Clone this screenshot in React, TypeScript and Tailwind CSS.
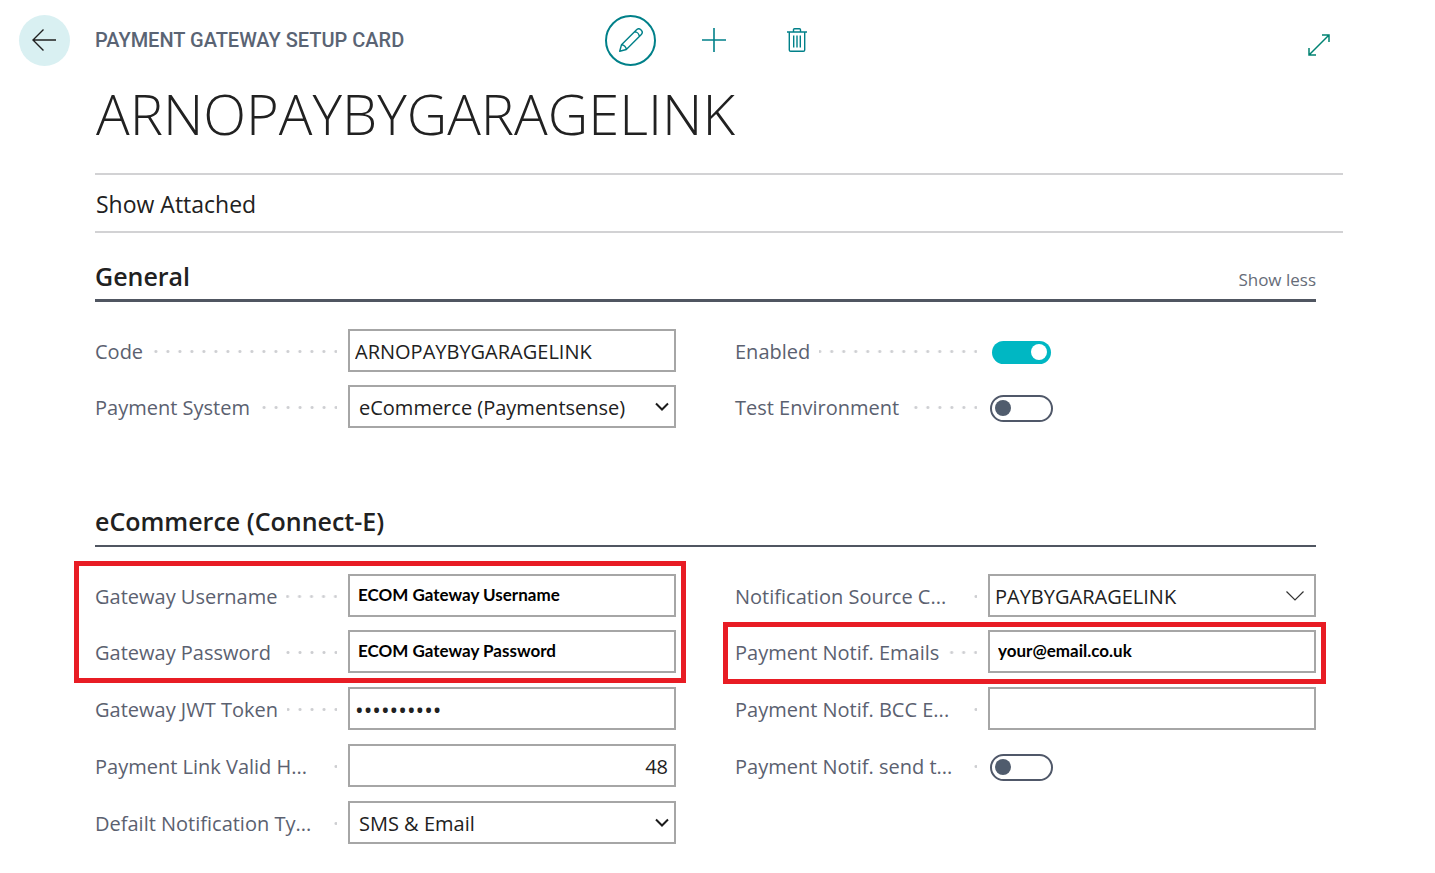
import { useState, type ReactNode } from "react";

const box =
  "h-[43px] w-full border-2 border-[#a6a6a6] bg-white pt-[2px] leading-6 text-[#212121] outline-none";

function Leader() {
  return (
    <span
      aria-hidden="true"
      className="mr-[11px] ml-[9px] h-[3px] flex-1 bg-[radial-gradient(circle_at_center,#cdced1_1px,transparent_2px)] bg-[length:12px_3px] bg-[position:right_-5px_center] bg-repeat-x"
    />
  );
}

type FieldProps = { id: string; label: string; children: ReactNode };

function Field({ id, label, children }: FieldProps) {
  const long = label.endsWith("...");
  return (
    <div className="flex h-[43px] items-center">
      <div className="flex w-[253px] shrink-0 items-center pt-[2px]">
        <label
          htmlFor={id}
          className={`text-[20px] leading-6 whitespace-nowrap text-[#5b6170] ${long ? "min-w-[226px]" : ""}`}
        >
          {label}
        </label>
        <Leader />
      </div>
      <div className="relative flex min-w-0 flex-1 items-center">{children}</div>
    </div>
  );
}

function TextField({ id, label, value }: { id: string; label: string; value: string }) {
  return (
    <Field id={id} label={label}>
      <input id={id} type="text" defaultValue={value} className={`${box} px-[5px] text-[20px]`} />
    </Field>
  );
}

function BoldField({ id, label, value }: { id: string; label: string; value: string }) {
  return (
    <Field id={id} label={label}>
      <input
        id={id}
        type="text"
        defaultValue={value}
        className="h-[43px] w-full border-2 border-[#a6a6a6] bg-white px-2 pb-[3px] font-[Lato,sans-serif] text-[17px] leading-6 font-bold text-black outline-none"
      />
    </Field>
  );
}

function SelectField({ id, label, value }: { id: string; label: string; value: string }) {
  return (
    <Field id={id} label={label}>
      <select id={id} defaultValue={value} className={`${box} appearance-none px-[9px] text-[20px]`}>
        <option>{value}</option>
      </select>
      <svg
        viewBox="0 0 14 10"
        className="pointer-events-none absolute right-[7px] h-[10px] w-[14px]"
        fill="none"
        stroke="#1b1b1b"
        strokeWidth="2"
      >
        <path d="M1 1.5 7 7.5 13 1.5" />
      </svg>
    </Field>
  );
}

function Toggle({ id, label, initial }: { id: string; label: string; initial: boolean }) {
  const [on, setOn] = useState(initial);
  return (
    <Field id={id} label={label}>
      <input
        id={id}
        type="checkbox"
        role="switch"
        checked={on}
        onChange={() => setOn(!on)}
        className="absolute left-[2px] h-[27px] w-[63px] cursor-pointer opacity-0"
      />
      <div className="pointer-events-none flex pt-[3px] pl-[2px]">
        {on ? (
          <span className="mx-[2px] flex h-[23px] w-[59px] items-center justify-end rounded-full bg-[#00b7c3] pr-1">
            <span className="size-4 rounded-full bg-white" />
          </span>
        ) : (
          <span className="flex h-[27px] w-[63px] items-center rounded-full border-2 border-[#505869] pl-[3px]">
            <span className="size-4 rounded-full bg-[#505c6d]" />
          </span>
        )}
      </div>
    </Field>
  );
}

export default function App() {
  return (
    <div className="min-h-screen bg-white pb-6 font-['Open_Sans','Noto_Sans',sans-serif] text-[#212121]">
      <header className="flex items-center pt-[15px] pr-[105px] pl-[19px]">
        <button
          type="button"
          aria-label="Back"
          className="flex size-[51px] shrink-0 items-center justify-center rounded-full bg-[#d9f0f2] pr-px pb-px"
        >
          <svg viewBox="0 0 24 22" className="h-[22px] w-6" fill="none" stroke="#212121" strokeWidth="1.4">
            <path d="M11.5.5 1 11l10.500 10.500M1 11h23" />
          </svg>
        </button>
        <span className="ml-[25px] w-[510px] shrink-0 pb-[2px] font-[Roboto,sans-serif] text-[20px] leading-6 font-medium text-[#5a6474]">
          PAYMENT GATEWAY SETUP CARD
        </span>
        <div className="flex gap-8">
          <button
            type="button"
            aria-label="Edit"
            className="flex size-[51px] items-center justify-center rounded-full border-2 border-[#008089] pb-px"
          >
            <svg viewBox="0 0 24 24" className="size-6" fill="none" stroke="#008089" strokeWidth="1.4" strokeLinejoin="round">
              <path d="M.7 23.300 2.500 16.700 17.300 1.900a3.300 3.300 0 0 1 4.800 4.800L7.300 21.500ZM2.500 16.700c2.500.1 4.700 2.300 4.800 4.800M15.500 3.700c2.600.1 4.700 2.200 4.800 4.800" />
            </svg>
          </button>
          <button type="button" aria-label="New" className="flex size-[51px] items-center justify-center pb-px">
            <svg viewBox="0 0 24 24" className="size-6" fill="none" stroke="#008089" strokeWidth="1.6">
              <path d="M12 0v24M0 12h24" />
            </svg>
          </button>
          <button type="button" aria-label="Delete" className="flex size-[51px] items-center justify-center pb-px">
            <svg viewBox="0 0 20 24" className="h-6 w-5" fill="none" stroke="#008089" strokeWidth="1.4">
              <path d="M0 4h20M6.500 4V1.700q0-1 1-1h5q1 0 1 1V4M2.300 4v18q0 1.300 1.300 1.300h12.800q1.300 0 1.300-1.300V4M6.700 7.500v12M10 7.500v12M13.300 7.500v12" />
            </svg>
          </button>
        </div>
        <button type="button" aria-label="Expand" className="mt-2 ml-auto">
          <svg viewBox="0 0 22 22" className="size-[22px]" fill="none" stroke="#008272" strokeWidth="1.5">
            <path d="M1 21 21 1M14 1h7v7M1 14v7h7" />
          </svg>
        </button>
      </header>

      <main className="pr-[92px] pl-[95px]">
        <h1 className="mt-[7px] px-px text-[56px] leading-[80px] font-light whitespace-nowrap">ARNOPAYBYGARAGELINK</h1>

        <nav className="mt-5 flex h-[60px] items-center border-y-2 border-[#d2d2d4]">
          <button type="button" className="px-px pt-px text-[23px] leading-8">
            Show Attached
          </button>
        </nav>

        <div className="pr-[27px]">
          <section>
            <div className="flex h-[69px] items-end justify-between border-b-3 border-[#505661] pb-[7px]">
              <h2 className="text-[25px] leading-8 font-semibold">General</h2>
              <button type="button" className="text-[17px] leading-6 text-[#666c78]">
                Show less
              </button>
            </div>
            <div className="mt-[27px] grid grid-cols-2 gap-x-[59px]">
              <div className="flex flex-col gap-[13px]">
                <TextField id="code" label="Code" value="ARNOPAYBYGARAGELINK" />
                <SelectField id="system" label="Payment System" value="eCommerce (Paymentsense)" />
              </div>
              <div className="flex flex-col gap-[13px]">
                <Toggle id="enabled" label="Enabled" initial={true} />
                <Toggle id="test" label="Test Environment" initial={false} />
              </div>
            </div>
          </section>

          <section className="mt-[74px]">
            <div className="flex h-[45px] items-end border-b-2 border-[#505661] pb-2">
              <h2 className="text-[25px] leading-8 font-semibold">eCommerce (Connect-E)</h2>
            </div>
            <div className="mt-[27px] grid grid-cols-2 gap-x-[59px]">
              <div className="flex flex-col gap-[14px]">
                <div className="relative flex flex-col gap-[13px]">
                  <BoldField id="username" label="Gateway Username" value="ECOM Gateway Username" />
                  <BoldField id="password" label="Gateway Password" value="ECOM Gateway Password" />
                  <div className="pointer-events-none absolute -top-[13px] -right-[10px] -bottom-[10px] -left-[21px] border-5 border-[#e81c24]" />
                </div>
                <Field id="jwt" label="Gateway JWT Token">
                  <input id="jwt" type="password" defaultValue="0000000000" className={`${box} px-[5px] text-[23px]`} />
                </Field>
                <Field id="hours" label="Payment Link Valid H...">
                  <input id="hours" type="text" defaultValue="48" className={`${box} px-[6px] text-right text-[20px]`} />
                </Field>
                <SelectField id="type" label="Defailt Notification Ty..." value="SMS & Email" />
              </div>
              <div className="flex flex-col gap-[14px]">
                <div className="flex flex-col gap-[13px]">
                  <Field id="source" label="Notification Source C...">
                    <input id="source" type="text" defaultValue="PAYBYGARAGELINK" className={`${box} px-[5px] text-[20px]`} />
                    <button type="button" aria-label="Choose a value" className="absolute right-3">
                      <svg viewBox="0 0 18 10" className="h-[10px] w-[18px]" fill="none" stroke="#333" strokeWidth="1.2">
                        <path d="M.5.5 9 9 17.500.5" />
                      </svg>
                    </button>
                  </Field>
                  <div className="relative">
                    <BoldField id="emails" label="Payment Notif. Emails" value="your@email.co.uk" />
                    <div className="pointer-events-none absolute -top-2 -right-[10px] -bottom-[11px] -left-3 border-5 border-[#e81c24]" />
                  </div>
                </div>
                <TextField id="bcc" label="Payment Notif. BCC E..." value="" />
                <Toggle id="send" label="Payment Notif. send t..." initial={false} />
              </div>
            </div>
          </section>
        </div>
      </main>
    </div>
  );
}
